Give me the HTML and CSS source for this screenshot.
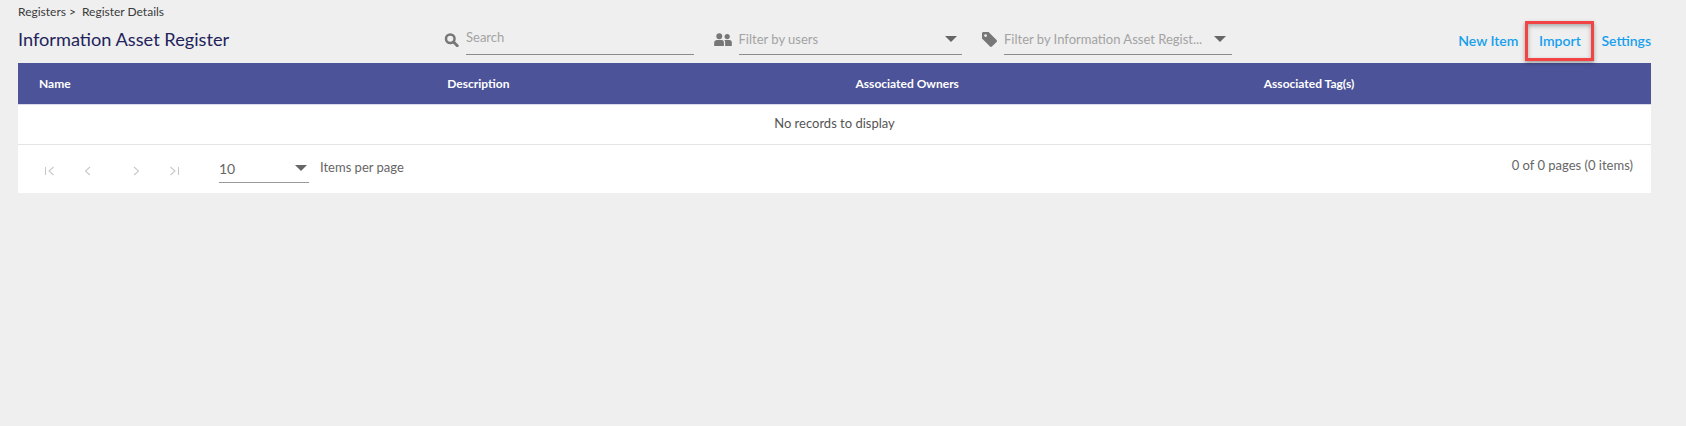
FILE: index.html
```html
<!DOCTYPE html>
<html lang="en">
<head>
<meta charset="utf-8">
<title>Information Asset Register</title>
<link rel="stylesheet" href="styles.css">
</head>
<body>
<div class="page">
  <div class="crumbs"><span>Registers &gt;</span><span>Register Details</span></div>
  <div class="toolbar">
    <h1 class="title">Information Asset Register</h1>
    <div class="filters">
      <div class="filter filter-search">
        <svg class="icon" width="15" height="14" viewBox="0 0 18 17"><circle cx="7.500" cy="7" r="5.200" fill="none" stroke="#777" stroke-width="3"/><path d="M11.500 11L16 15.500" stroke="#777" stroke-width="3.400" stroke-linecap="round"/></svg>
        <div class="field field-search">Search</div>
      </div>
      <div class="filter filter-users">
        <svg class="icon" width="18" height="13" viewBox="0 0 19 14"><circle cx="5.500" cy="3.400" r="3.200" fill="#777"/><circle cx="14" cy="3.800" r="2.800" fill="#777"/><path d="M0 14V10.500C0 8.500 1.500 7.500 3 7.500H8C9.800 7.500 10.500 8.800 10.500 10.500V14Z" fill="#777"/><path d="M11.800 14V9.800C11.800 8.800 11.500 8 11 7.500H16.500C18 7.500 19 8.500 19 10V14Z" fill="#777"/></svg>
        <div class="field field-users"><span>Filter by users</span><i class="caret"></i></div>
      </div>
      <div class="filter filter-tags">
        <svg class="icon" width="15" height="15" viewBox="0 0 16 16"><path fill-rule="evenodd" d="M0 1.500C0 .7.700 0 1.500 0H7L15.500 8.500C16.100 9.100 16.100 10 15.500 10.600L10.600 15.500C10 16.100 9.100 16.100 8.500 15.500L0 7ZM3.800 2.300A1.500 1.500 0 1 0 3.800 5.300A1.500 1.500 0 1 0 3.800 2.300Z" fill="#777"/></svg>
        <div class="field field-tags"><span>Filter by Information Asset Regist...</span><i class="caret"></i></div>
      </div>
    </div>
    <nav class="actions">
      <a class="action">New Item</a>
      <a class="action action-marked">Import</a>
      <a class="action">Settings</a>
    </nav>
  </div>
  <section class="grid">
    <div class="grid-head">
      <div>Name</div>
      <div>Description</div>
      <div>Associated Owners</div>
      <div>Associated Tag(s)</div>
    </div>
    <div class="grid-empty">No records to display</div>
    <div class="pager">
      <div class="pager-buttons">
        <svg width="12" height="12" viewBox="0 0 12 12"><path d="M1.500 2V10M9.500 2L5 6L9.500 10" fill="none" stroke="#c9c9c9" stroke-width="1.100"/></svg>
        <svg width="12" height="12" viewBox="0 0 12 12"><path d="M8 2L3.500 6L8 10" fill="none" stroke="#c9c9c9" stroke-width="1.100"/></svg>
        <svg class="pager-next" width="12" height="12" viewBox="0 0 12 12"><path d="M4 2L8.500 6L4 10" fill="none" stroke="#c9c9c9" stroke-width="1.100"/></svg>
        <svg width="12" height="12" viewBox="0 0 12 12"><path d="M2.500 2L7 6L2.500 10M10.500 2V10" fill="none" stroke="#c9c9c9" stroke-width="1.100"/></svg>
      </div>
      <div class="size-select"><span>10</span><i class="caret"></i></div>
      <div class="size-label">Items per page</div>
      <div class="pager-info">0 of 0 pages (0 items)</div>
    </div>
  </section>
</div>
</body>
</html>
```
FILE: styles.css
```css
* { box-sizing: border-box; }
html, body { margin: 0; height: 100%; }
body {
  background: #efefef;
  font-family: Lato, "Noto Sans", sans-serif;
  color: #444;
  overflow: hidden;
}
.page { padding: 1px 35px 0 18px; }
.crumbs {
  display: flex;
  gap: 6px;
  height: 22px;
  font-size: 12px;
  line-height: 22px;
  color: #3a3a3a;
}
.toolbar {
  display: flex;
  align-items: flex-start;
  height: 40px;
}
.title {
  margin: 3px 0 0;
  width: 426px;
  flex: none;
  font-size: 18.2px;
  font-weight: 400;
  line-height: 26px;
  color: #23235b;
}
.filters { display: flex; width: 788px; flex: none; }
.filter { display: flex; align-items: flex-start; }
.filter .icon { flex: none; margin: 10px 7px 0 0; }
.filter-search { width: 270px; }
.filter-users { width: 269px; }
.filter-tags .icon { margin-top: 9px; }
.field {
  height: 32px;
  border-bottom: 1px solid #8c8c8c;
  font-size: 13px;
  line-height: 27px;
  color: #a3a3a3;
  display: flex;
  justify-content: space-between;
  align-items: center;
}
.field-search { width: 228px; padding-bottom: 3px; }
.field-users { width: 223px; padding: 2px 5px 0 0; }
.field-tags { width: 228px; padding: 2px 6px 0 0; }
.field .caret { margin-top: -2px; }
.caret {
  display: block;
  width: 0;
  height: 0;
  border-left: 6px solid transparent;
  border-right: 6px solid transparent;
  border-top: 6px solid #666;
}
.actions {
  display: flex;
  align-items: center;
  margin-left: auto;
  height: 36px;
  font-size: 14px;
  color: #16a0ee;
}
.action { display: block; line-height: 36px; font-weight: 600; }
.action-marked {
  margin: 0 7px;
  width: 69px;
  height: 40px;
  line-height: 34px;
  text-align: center;
  border: 3px solid #f24444;
  box-shadow: inset 0 2px 4px rgba(0, 0, 0, .3), 0 2px 4px rgba(0, 0, 0, .35);
}
.grid { background: #fff; height: 130px; }
.grid-head {
  display: grid;
  grid-template-columns: repeat(4, 408.25px);
  align-items: center;
  height: 42px;
  padding-left: 21px;
  background: #4c5399;
  border-bottom: 1px solid #d8d9ea;
  color: #fff;
  font-size: 12px;
  font-weight: 700;
}
.grid-empty {
  height: 40px;
  border-bottom: 1px solid #e4e4e4;
  font-size: 13px;
  line-height: 36px;
  text-align: center;
  color: #555;
}
.pager {
  display: flex;
  align-items: flex-start;
  height: 48px;
  padding-right: 18px;
  font-size: 13px;
  color: #666;
}
.pager-buttons {
  display: flex;
  gap: 26px;
  width: 201px;
  padding: 20px 0 0 26px;
  flex: none;
}
.pager-next { margin-left: 10px; }
.size-select {
  display: flex;
  align-items: center;
  justify-content: space-between;
  width: 90px;
  height: 38px;
  margin-right: 11px;
  padding: 9px 2px 0 0;
  border-bottom: 1px solid #999;
  font-size: 14px;
  color: #666;
}
.size-select .caret { margin-top: 0; }
.size-label { line-height: 44px; }
.pager-info { margin-left: auto; line-height: 40px; }
```
